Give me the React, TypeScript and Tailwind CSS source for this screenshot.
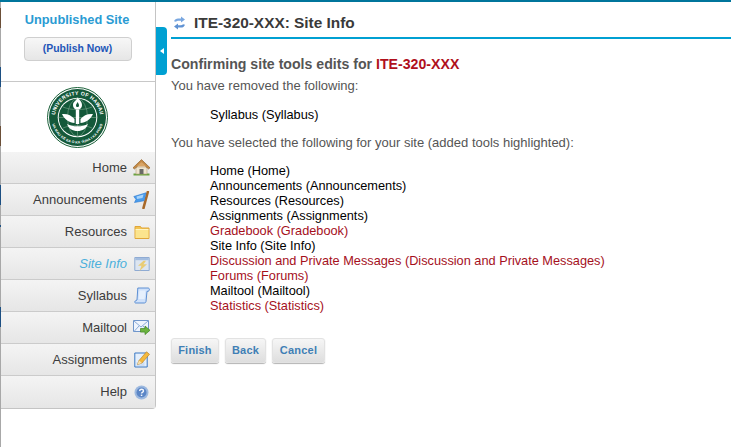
import React from "react";

const font = { fontFamily: '"Liberation Sans", Arial, sans-serif' };

const Home = () => (
  <svg width="17" height="17" viewBox="0 0 17 17">
    <path d="M.5 14.500h16v2H.5z" fill="#6aa23f" />
    <path d="M3 8h11v7H3z" fill="#efe6d2" stroke="#b5a27c" strokeWidth=".6" />
    <path d="M6.500 10h4v5h-4z" fill="#6a6a66" />
    <path d="M0 8.800 8.500.6 17 8.800l-1.400 1.200L8.500 3.800 1.400 10z" fill="#c48a45" stroke="#8a5a24" strokeWidth=".6" />
    <path d="M3.500 7.500 8.500 3l5 4.500" fill="#d9a566" />
  </svg>
);
const Flag = () => (
  <svg width="17" height="18" viewBox="0 0 17 18">
    <path d="M10.500 17 14.800 1" stroke="#a8692a" strokeWidth="2.600" strokeLinecap="round" />
    <path d="M.8 5.500 13 1.800l-2 8L1.500 11.500 3 8.500z" fill="#4a9cec" stroke="#2c79cf" strokeWidth=".6" />
    <path d="M3.500 5.500 10.500 3.500 9.500 7 4 8z" fill="#a9d4fa" />
  </svg>
);
const Folder = () => (
  <svg width="16" height="16" viewBox="0 0 16 16">
    <path d="M1 2.500h5.500l1 1.500h7.500v10.500H1z" fill="#f3c452" stroke="#e0a63a" />
    <path d="M1.500 6h13v8H1.500z" fill="#fbe48e" />
    <path d="M1.500 5h13v1h-13z" fill="#fff4c4" />
  </svg>
);
const Window = () => (
  <svg width="16" height="16" viewBox="0 0 16 16">
    <path d="M.8 1.500h14.400v13H.8z" fill="#dde5f0" stroke="#8fabd3" />
    <path d="M1.300 2h13.400v2.200H1.300z" fill="#a3bde0" />
    <path d="M9.500 4.800 4 9.800h3.500L5.500 15l7.500-6.700H9.500l2.500-3.500z" fill="#e9cc74" />
  </svg>
);
const Scroll = () => (
  <svg width="16" height="17" viewBox="0 0 16 17">
    <path d="M3.800 1h10.500c1.500.2 1.500 3-.2 3.300H13l-1 10.200c0 1-1 1.500-2 1.500H1.500c-1.200-.3-1-2 .3-2.300L3 13z" fill="#cfe1fa" stroke="#4f86cf" strokeWidth=".9" />
    <path d="M5.500 3.500h6L10.500 12H4.500z" fill="#e6f0fd" />
  </svg>
);
const Mail = () => (
  <svg width="17" height="17" viewBox="0 0 17 17">
    <path d="M.5 1.500h15v11H.5z" fill="#eef4fd" stroke="#6f96cb" />
    <path d="M1 2l7 6 7-6M1 12.500l5-5.500M15 12.500l-5-5.500" fill="none" stroke="#7ea2d3" strokeWidth=".9" />
    <path d="M7.500 9.500h4.500V7l5 4.300-5 4.300v-2.500H7.500z" fill="#6bb33f" stroke="#3d8521" strokeWidth=".7" />
  </svg>
);
const Pencil = () => (
  <svg width="16" height="17" viewBox="0 0 16 17">
    <path d="M.8 2h12.400v14H.8z" fill="#e4effc" stroke="#3a79c4" />
    <path d="M2.500 12h8M2.500 14h8" stroke="#a9c5e8" strokeWidth=".8" />
    <path d="M3.500 13.500 5 9.500 12.500.8 15.500 3.300 8 12z" fill="#f4b93e" stroke="#b67a1d" strokeWidth=".6" />
    <path d="M3.500 13.500 5 9.500 8 12z" fill="#f6e0b0" />
  </svg>
);
const Help = () => (
  <svg width="15" height="15" viewBox="0 0 15 15">
    <circle cx="7.500" cy="7.500" r="7" fill="#9db9df" />
    <circle cx="7.500" cy="7.500" r="5" fill="#5b86c6" />
    <path d="M5.600 6c.2-2.300 3.900-2.200 3.900 0 0 1.400-1.900 1.300-2 2.500" fill="none" stroke="#f4f7fc" strokeWidth="1.400" />
    <path d="M6.800 9.600h1.500V11H6.800z" fill="#f4f7fc" />
  </svg>
);
const Refresh = () => (
  <svg width="13" height="14" viewBox="0 0 13 14">
    <path d="M1 5.200c.8-2 2.200-2.800 4-2.800h3V.6l4 3-4 3V4.700H5.200c-1 0-1.700.3-2.200 1z" fill="#79a7e0" />
    <path d="M12 8.800c-.8 2-2.200 2.800-4 2.800H5v1.800l-4-3 4-3v1.900h2.800c1 0 1.700-.3 2.200-1z" fill="#5f92d3" />
  </svg>
);
const Seal = () => (
  <svg width="61" height="61" viewBox="0 0 61 61">
    <defs>
      <path id="sealTop" d="M9.360 38.200A22.500 22.500 0 1 1 51.640 38.200" />
      <path id="sealBottom" d="M4.500 30.500a26 26 0 0 0 52 0" />
    </defs>
    <circle cx="30.500" cy="30.500" r="30" fill="#fff" stroke="#1a6039" strokeWidth="1" />
    <circle cx="30.500" cy="30.500" r="28.500" fill="#14593a" />
    <circle cx="30.500" cy="30.500" r="19.800" fill="#fff" />
    <circle cx="30.500" cy="30.500" r="18.800" fill="#14593a" />
    <text fontSize="5.200" fontWeight="700" fill="#fff" fontFamily='"Liberation Sans", sans-serif' letterSpacing=".3">
      <textPath href="#sealTop" startOffset="50%" textAnchor="middle">UNIVERSITY OF HAWAII</textPath>
    </text>
    <text fontSize="3.500" fontWeight="700" fill="#fff" fontFamily='"Liberation Sans", sans-serif' letterSpacing=".1">
      <textPath href="#sealBottom" startOffset="50%" textAnchor="middle">UA MAU KE EA O KA ʻĀINA I KA PONO</textPath>
    </text>
    <path d="M12 30.500h37M30.500 12v37M16 20c8 3.500 21 3.500 29 0M16 41c8-3.500 21-3.500 29 0" fill="none" stroke="#7ba58c" strokeWidth=".6" />
    <ellipse cx="30.500" cy="30.500" rx="10" ry="18.800" fill="none" stroke="#7ba58c" strokeWidth=".6" />
    <path d="M15 27c5.500-.5 9.500 1.500 12.500 5v4c-5-.5-10-3.500-12.500-9zM46 27c-5.500-.5-9.500 1.500-12.500 5v4c5-.5 10-3.500 12.500-9z" fill="#fff" />
    <path d="M20 37c3 1.500 6.500 2.300 10.500 2.300S38 38.500 41 37c-1.500 4.500-5.500 7-10.500 7S21.500 41.500 20 37z" fill="#fff" />
    <path d="M28.800 23h3.400v14h-3.400z" fill="#fff" />
    <path d="M26 18c0-3.500 3.300-4 4.500-7.500 2.200 3 4.500 4 4.500 7.500 0 3-2.200 4.800-4.500 4.800S26 21 26 18z" fill="#fff" />
    <path d="M29 18.500c0-1.500 1.100-1.800 1.500-3.500.8 1.200 1.500 2 1.500 3.500 0 .9-.7 1.600-1.500 1.600s-1.500-.7-1.500-1.600z" fill="#14593a" />
  </svg>
);

const navItems: { label: string; icon: React.ReactNode; active?: boolean }[] = [
  { label: "Home", icon: <Home /> },
  { label: "Announcements", icon: <Flag /> },
  { label: "Resources", icon: <Folder /> },
  { label: "Site Info", icon: <Window />, active: true },
  { label: "Syllabus", icon: <Scroll /> },
  { label: "Mailtool", icon: <Mail /> },
  { label: "Assignments", icon: <Pencil /> },
  { label: "Help", icon: <Help /> },
];

const selected: { text: string; added?: boolean }[] = [
  { text: "Home (Home)" },
  { text: "Announcements (Announcements)" },
  { text: "Resources (Resources)" },
  { text: "Assignments (Assignments)" },
  { text: "Gradebook (Gradebook)", added: true },
  { text: "Site Info (Site Info)" },
  { text: "Discussion and Private Messages (Discussion and Private Messages)", added: true },
  { text: "Forums (Forums)", added: true },
  { text: "Mailtool (Mailtool)" },
  { text: "Statistics (Statistics)", added: true },
];

const Btn = ({ label, w }: { label: string; w: string }) => (
  <div
    className={`${w} h-[25px] flex items-center justify-center rounded-[3px] border border-[#e2e2e2] bg-gradient-to-b from-[#f6f6f6] to-[#dedede] shadow-[0_1px_1px_rgba(0,0,0,0.3)] text-[11px] font-bold text-[#3f7fb5] tracking-[0.2px]`}
  >
    {label}
  </div>
);

const stripSegments: { h: string; c: string }[] = [
  { h: "h-[6px]", c: "bg-[#a8a8a8]" },
  { h: "h-[20px]", c: "bg-[#6b4f38]" },
  { h: "h-[39px]", c: "bg-[#a8a8a8]" },
  { h: "h-[20px]", c: "bg-[#1c4f82]" },
  { h: "h-[39px]", c: "bg-[#a8a8a8]" },
  { h: "h-[20px]", c: "bg-[#6b4f38]" },
  { h: "h-[39px]", c: "bg-[#a8a8a8]" },
  { h: "h-[20px]", c: "bg-[#1c4f82]" },
  { h: "h-[20px]", c: "bg-[#a8a8a8]" },
  { h: "h-[2px]", c: "bg-[#1c4f82]" },
  { h: "h-[80px]", c: "bg-[#a8a8a8]" },
  { h: "h-[20px]", c: "bg-[#1c4f82]" },
  { h: "h-[120px]", c: "bg-[#a8a8a8]" },
];

export default function App() {
  return (
    <div className="w-[731px] h-[447px] overflow-hidden bg-white flex flex-col" style={font}>
      <div className="h-[2px] bg-[#00759c] shrink-0" />
      <div className="flex flex-1 min-h-0">
        <div className="w-px shrink-0 flex flex-col">
          {stripSegments.map((s, i) => (
            <div key={i} className={`${s.h} ${s.c} shrink-0`} />
          ))}
        </div>
        <aside className="w-[155px] shrink-0 self-start border-r border-b border-[#c4c4c4] rounded-br-[4px] bg-white">
          <div className="h-[80px] border-b border-[#c8c8c8] flex flex-col items-center pt-[9px] pr-[2px]">
            <div className="text-[12.8px] font-bold text-[#2a9bd3] leading-[18px]">Unpublished Site</div>
            <div className="mt-[8px] ml-[1px] w-[108px] h-[24px] rounded-[4px] border border-[#cfcfcf] bg-gradient-to-b from-[#f7f7f7] to-[#e6e6e6] flex items-center justify-center text-[10.4px] font-bold text-[#2255b8]">
              (Publish Now)
            </div>
          </div>
          <div className="h-[70px] flex items-center justify-center pr-[2px]">
            <Seal />
          </div>
          <nav>
            {navItems.map((n) => (
              <div
                key={n.label}
                className="h-[32px] flex items-center justify-end gap-[6px] pr-[5px] border-b border-[#cbcbcb] last:border-b-0 bg-gradient-to-b from-[#f4f4f4] to-[#e6e6e6]"
              >
                <span className={n.active ? "text-[13px] italic text-[#4cb0dc]" : "text-[13px] text-[#3c3c3c]"}>{n.label}</span>
                <span className="w-[17px] h-[17px] flex items-center justify-center">{n.icon}</span>
              </div>
            ))}
          </nav>
        </aside>
        <div className="self-start mt-[25px] w-[11px] h-[48px] rounded-r-[4px] bg-[#00a0d2] flex items-center justify-center shrink-0">
          <span className="w-0 h-0 border-y-[3px] border-y-transparent border-r-[4px] border-r-white" />
        </div>
        <main className="flex-1 min-w-0 pl-[4px]">
          <div className="h-[29px] pt-[6px] border-b-[2px] border-[#00a0d2] flex items-start pl-[2px] box-content">
            <span className="mt-[8px] flex"><Refresh /></span>
            <h1 className="ml-[8px] text-[15.4px] leading-[29px] font-bold text-[#3a3a3a]">ITE-320-XXX: Site Info</h1>
          </div>
          <h2 className="mt-[16px] text-[14.15px] leading-[18px] font-bold text-[#555555]">
            Confirming site tools edits for <span className="text-[#b0101c]">ITE-320-XXX</span>
          </h2>
          <p className="mt-[4px] text-[13px] leading-[18px] text-[#555555]">You have removed the following:</p>
          <p className="mt-[12px] ml-[39px] text-[12.75px] leading-[15px] text-black">Syllabus (Syllabus)</p>
          <p className="mt-[13px] text-[13px] leading-[15px] text-[#555555]">
            You have selected the following for your site (added tools highlighted):
          </p>
          <ul className="mt-[13px] ml-[39px] text-[12.75px] leading-[15px]">
            {selected.map((s) => (
              <li key={s.text} className={s.added ? "text-[#a5101c]" : "text-black"}>
                {s.text}
              </li>
            ))}
          </ul>
          <div className="mt-[25px] flex gap-[6px]">
            <Btn label="Finish" w="w-[48px]" />
            <Btn label="Back" w="w-[41px]" />
            <Btn label="Cancel" w="w-[53px]" />
          </div>
        </main>
      </div>
    </div>
  );
}
